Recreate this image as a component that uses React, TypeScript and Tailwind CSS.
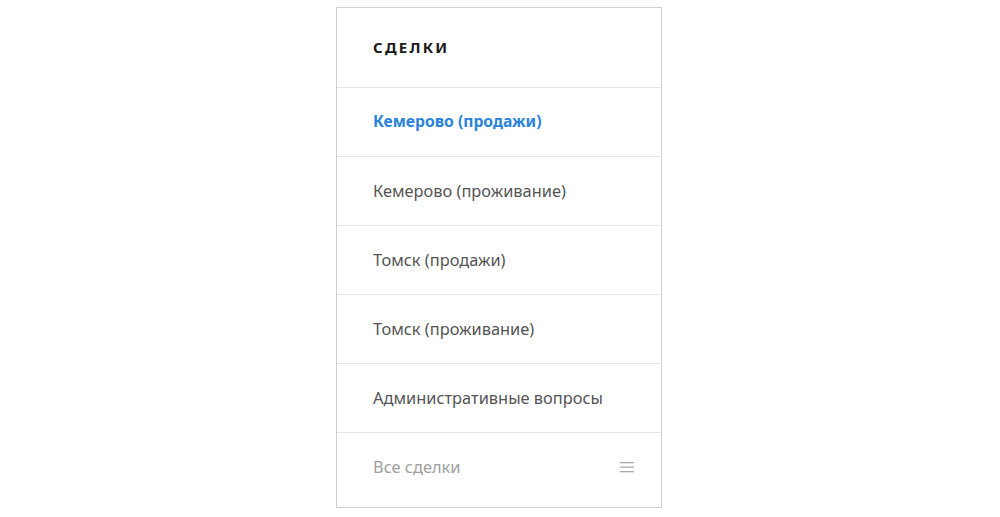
const items = [
  { label: "Кемерово (продажи)", active: true },
  { label: "Кемерово (проживание)" },
  { label: "Томск (продажи)" },
  { label: "Томск (проживание)" },
  { label: "Административные вопросы" },
];

export default function App() {
  return (
    <div
      className="min-h-screen bg-white flex justify-center items-start pt-[7px] pr-[2px]"
      style={{ fontFamily: '"Noto Sans", Roboto, sans-serif' }}
    >
      <div className="w-[326px] border border-[#cfcfcf] bg-white">
        <div className="h-[80px] flex items-center pl-[36px] border-b border-[#e6e6e6]">
          <span className="text-[15px] font-bold tracking-[0.15em] text-[#1a1a1a]">СДЕЛКИ</span>
        </div>
        {items.map((it) => (
          <div
            key={it.label}
            className="h-[69px] flex items-center pl-[36px] border-b border-[#e6e6e6]"
          >
            <span
              className={
                it.active
                  ? "text-[15.7px] font-bold text-[#2b83dc]"
                  : "text-[16.4px] text-[#555555]"
              }
            >
              {it.label}
            </span>
          </div>
        ))}
        <div className="h-[74px] flex items-center justify-between pl-[36px] pr-[27px] pb-[6px]">
          <span className="text-[16.4px] text-[#a0a0a0]">Все сделки</span>
          <svg width="14" height="12" viewBox="0 0 14 12" className="text-[#ababab]">
            <rect x="0" y="1" width="14" height="1.3" fill="currentColor" />
            <rect x="0" y="5.5" width="14" height="1.3" fill="currentColor" />
            <rect x="0" y="10" width="14" height="1.3" fill="currentColor" />
          </svg>
        </div>
      </div>
    </div>
  );
}
